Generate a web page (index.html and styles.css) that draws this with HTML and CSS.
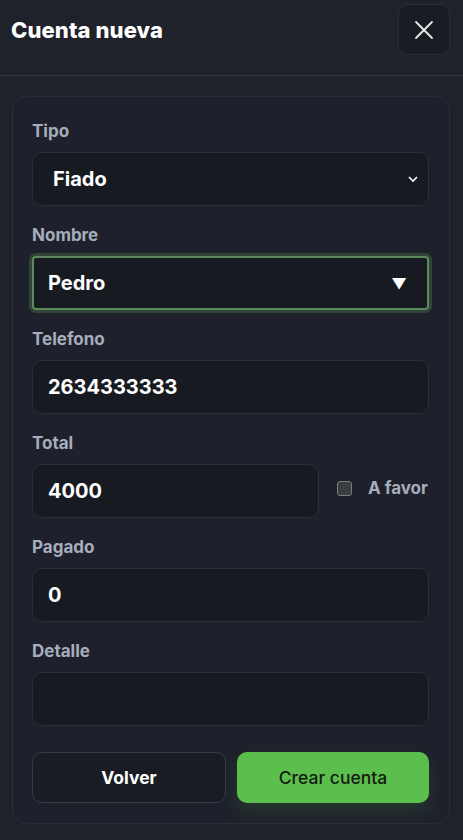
FILE: index.html
```html
<!DOCTYPE html>
<html>
<head>
<title>Cuenta nueva</title>
<link rel="stylesheet" href="styles.css">
</head>
<body>

<div class="header">
    <h1>Cuenta nueva</h1>
    <button class="close">
        <svg width="20" height="20" viewBox="0 0 20 20"><path d="M2 2 L18 18 M18 2 L2 18" stroke="#e8e9ec" stroke-width="1.8" stroke-linecap="round"/></svg>
    </button>
</div>

<div class="card">
    <div class="field">
        <label>Tipo</label>
        <div class="box select">
            <span>Fiado</span>
            <svg width="10" height="7" viewBox="0 0 10 7"><path d="M1 1 L5 5 L9 1" fill="none" stroke="#fff" stroke-width="1.6"/></svg>
        </div>
    </div>

    <div class="field">
        <label>Nombre</label>
        <div class="box focus">
            <span>Pedro</span>
            <span class="tri">▼</span>
        </div>
    </div>

    <div class="field">
        <label>Telefono</label>
        <div class="box"><span>2634333333</span></div>
    </div>

    <div class="field">
        <label>Total</label>
        <div class="row">
            <div class="box total"><span>4000</span></div>
            <div class="check">
                <span class="checkbox"></span>
                <span>A favor</span>
            </div>
        </div>
    </div>

    <div class="field">
        <label>Pagado</label>
        <div class="box"><span>0</span></div>
    </div>

    <div class="field">
        <label>Detalle</label>
        <div class="box"></div>
    </div>

    <div class="actions">
        <button class="btn back">Volver</button>
        <button class="btn create">Crear cuenta</button>
    </div>
</div>

</body>
</html>
```

FILE: styles.css
```css
body {
    background: #1f222b;
    color: white;
    font-family: Inter, "Noto Sans", sans-serif;
    margin: 0;
}

.header {
    display: flex;
    justify-content: space-between;
    align-items: center;
    padding: 4px 13px 20px 11px;
    border-bottom: 1px solid #30343e;
}

h1 {
    margin: 0;
    font-size: 22px;
    font-weight: 800;
    letter-spacing: 0.1px;
}

.close {
    width: 52px;
    height: 51px;
    background: #1a1c23;
    border: 1px solid #2b2e37;
    border-radius: 9px;
    display: flex;
    align-items: center;
    justify-content: center;
    padding: 0;
}

.card {
    margin: 20px 13px 17px 12px;
    padding: 24px 20px 20px 19px;
    border: 1px solid #2b2f39;
    border-radius: 16px;
    background: #1e212b;
    display: flex;
    flex-direction: column;
    gap: 19px;
}

.field {
    display: flex;
    flex-direction: column;
    gap: 11px;
}

label {
    font-size: 17px;
    font-weight: 700;
    line-height: 20px;
    color: #a6adbb;
}

.box {
    height: 54px;
    box-sizing: border-box;
    background: #181a22;
    border: 1px solid #2c2f39;
    border-radius: 10px;
    display: flex;
    align-items: center;
    justify-content: space-between;
    padding: 0 15px;
    font-size: 20px;
    font-weight: 700;
}

.select {
    padding: 0 10px 0 20px;
}

.focus {
    border: 2px solid #5c8a5c;
    border-radius: 4px;
    box-shadow: 0 0 0 3px rgba(70, 110, 72, 0.45);
    padding: 0 20px 0 14px;
}

.tri {
    font-size: 15px;
}

.row {
    display: flex;
    align-items: center;
}

.total {
    width: 287px;
}

.check {
    display: flex;
    align-items: center;
    gap: 16px;
    margin: 0 0 6px 18px;
    font-size: 17px;
    font-weight: 700;
    color: #a6adbb;
}

.checkbox {
    width: 13px;
    height: 13px;
    background: #3b3d41;
    border: 1px solid #7a7d84;
    border-radius: 3px;
}

.actions {
    display: flex;
    gap: 11px;
    margin-top: 7px;
}

.btn {
    flex: 1;
    height: 51px;
    border-radius: 10px;
    font-family: Inter, "Noto Sans", sans-serif;
    font-size: 17.5px;
    font-weight: 700;
}

.back {
    background: #1a1c24;
    border: 1px solid #363a45;
    color: white;
}

.create {
    background: #5bbf4d;
    border: none;
    color: #151a14;
    font-weight: 500;
    box-shadow: 0 8px 18px rgba(91, 191, 77, 0.15);
}
```
